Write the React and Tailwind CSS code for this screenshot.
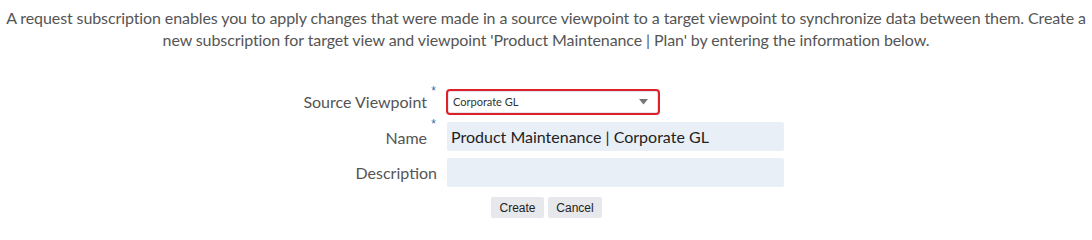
export default function App() {
  return (
    <div className="w-[1092px] h-[229px] bg-white overflow-hidden" style={{ fontFamily: 'Lato, "Open Sans", sans-serif' }}>
      <p className="text-center text-[16px] leading-[22px] text-[#555] pt-[7px] tracking-[-0.1px]">
        A request subscription enables you to apply changes that were made in a source viewpoint to a target viewpoint to synchronize data between them. Create a new subscription for target view and viewpoint 'Product Maintenance | Plan' by entering the information below.
      </p>
      <div className="mt-[38px] flex flex-col">
        <div className="flex items-center h-[26px]">
          <div className="w-[440px] flex justify-end items-start h-full">
            <span className="text-[16px] text-[#555] self-center">Source Viewpoint</span>
            <span className="text-[#3b6db0] text-[12px] w-[13px] text-center leading-none mt-[-4px]" style={{ fontFamily: '"Liberation Sans", Arial, sans-serif' }}>*</span>
          </div>
          <div className="ml-[6px] w-[214px] h-[26px] rounded-[4px] border-2 border-[#e01f26] flex items-center justify-between pl-[5px] pr-[10px] bg-white shadow-[inset_0_0_0_1px_#dfe6f0]">
            <span className="text-[11px] text-[#333]">Corporate GL</span>
            <svg width="9" height="6" viewBox="0 0 9 6"><path d="M0 0 L9 0 L4.5 5.5 Z" fill="#777" /></svg>
          </div>
        </div>
        <div className="flex items-center mt-[7px] h-[29px]">
          <div className="w-[440px] flex justify-end items-start h-full">
            <span className="text-[16px] text-[#555] self-end mb-[1px]">Name</span>
            <span className="text-[#3b6db0] text-[12px] w-[13px] text-center leading-none mt-[-4px]" style={{ fontFamily: '"Liberation Sans", Arial, sans-serif' }}>*</span>
          </div>
          <div className="ml-[7px] w-[337px] h-[29px] rounded-[2px] bg-[#e9eff6] flex items-center pl-[4px]">
            <span className="text-[16px] text-[#222]">Product Maintenance | Corporate GL</span>
          </div>
        </div>
        <div className="flex items-center mt-[7px] h-[29px]">
          <div className="w-[440px] flex justify-end pr-[3px]">
            <span className="text-[16px] text-[#555]">Description</span>
          </div>
          <div className="ml-[7px] w-[337px] h-[29px] rounded-[2px] bg-[#e9eff6]" />
        </div>
        <div className="flex mt-[10px] ml-[491px] gap-[4px]" style={{ fontFamily: '"Liberation Sans", Arial, sans-serif' }}>
          <button className="w-[53px] h-[21px] bg-[#e6e8eb] rounded-[2px] text-[12px] text-[#222]">Create</button>
          <button className="w-[54px] h-[21px] bg-[#e6e8eb] rounded-[2px] text-[12px] text-[#222]">Cancel</button>
        </div>
      </div>
    </div>
  );
}
